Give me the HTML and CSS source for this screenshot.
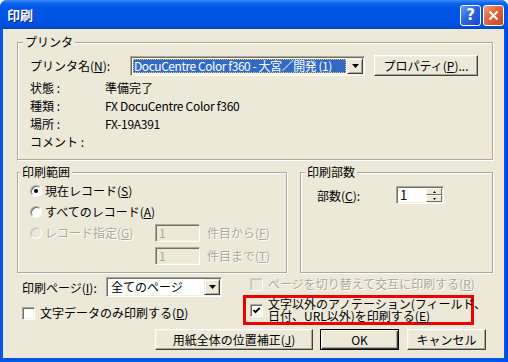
FILE: index.html
```html
<!DOCTYPE html>
<html lang="ja">
<head>
<meta charset="utf-8">
<title>印刷</title>
<link rel="stylesheet" href="styles.css">
</head>
<body>
<div class="window">
  <div class="titlebar">
    <span class="title">印刷</span>
    <div class="tb-buttons">
      <span class="tb-btn help">?</span>
      <span class="tb-btn close"><svg width="11" height="11" viewBox="0 0 11 11"><path d="M1.5 1.5 L9.5 9.5 M9.5 1.5 L1.5 9.5" stroke="#fff" stroke-width="2" fill="none"/></svg></span>
    </div>
  </div>
  <div class="client">
    <fieldset class="group printer">
      <legend class="lg-printer">プリンタ</legend>
      <div class="printer-inner">
        <div class="name-row">
          <span class="name-label">プリンタ名(<u>N</u>):</span>
          <div class="combo printer-combo">
            <span class="combo-value selected">DocuCentre Color f360 - 大宮／開発 (1)</span>
            <span class="drop-btn"><svg width="7" height="4" viewBox="0 0 7 4"><polygon points="0,0 7,0 3.5,4" fill="#000"/></svg></span>
          </div>
          <button class="btn prop-btn">プロパティ(<u>P</u>)...</button>
        </div>
        <dl class="info">
          <dt>状態 :</dt><dd>準備完了</dd>
          <dt>種類 :</dt><dd class="latin">FX DocuCentre Color f360</dd>
          <dt>場所 :</dt><dd class="latin">FX-19A391</dd>
          <dt>コメント :</dt><dd></dd>
        </dl>
      </div>
    </fieldset>

    <div class="groups-row">
      <fieldset class="group range">
        <legend class="lg-range">印刷範囲</legend>
        <div class="range-inner">
          <div class="opt-row">
            <span class="radio checked"></span><span class="opt-text">現在レコード(<u>S</u>)</span>
          </div>
          <div class="opt-row">
            <span class="radio"></span><span class="opt-text">すべてのレコード(<u>A</u>)</span>
          </div>
          <div class="opt-row">
            <span class="opt-lead"><span class="radio disabled"></span><span class="opt-text disabled-text">レコード指定(<u>G</u>)</span></span>
            <span class="field disabled-field">1</span>
            <span class="after-text disabled-text">件目から(<u>F</u>)</span>
          </div>
          <div class="opt-row last-row">
            <span class="field disabled-field">1</span>
            <span class="after-text disabled-text">件目まで(<u>T</u>)</span>
          </div>
        </div>
      </fieldset>
      <fieldset class="group copies">
        <legend class="lg-copies">印刷部数</legend>
        <div class="copies-inner">
          <span class="copies-label">部数(<u>C</u>):</span>
          <div class="spin">
            <span class="spin-value">1</span>
            <span class="spin-btns">
              <span class="spin-btn"><svg width="3" height="2" viewBox="0 0 3 2"><polygon points="1.5,0 3,2 0,2" fill="#000"/></svg></span>
              <span class="spin-btn"><svg width="3" height="2" viewBox="0 0 3 2"><polygon points="0,0 3,0 1.5,2" fill="#000"/></svg></span>
            </span>
          </div>
        </div>
      </fieldset>
    </div>

    <div class="bottom">
      <div class="bottom-left">
        <div class="page-row">
          <span class="page-label">印刷ページ(<u>I</u>):</span>
          <div class="combo page-combo">
            <span class="combo-value">全てのページ</span>
            <span class="drop-btn"><svg width="7" height="4" viewBox="0 0 7 4"><polygon points="0,0 7,0 3.5,4" fill="#000"/></svg></span>
          </div>
        </div>
        <div class="check-row text-only">
          <span class="checkbox"></span><span class="check-text">文字データのみ印刷する(<u>D</u>)</span>
        </div>
      </div>
      <div class="bottom-right">
        <div class="check-row alt-row">
          <span class="checkbox disabled"></span><span class="check-text disabled-text">ページを切り替えて交互に印刷する(<u>R</u>)</span>
        </div>
        <div class="highlight">
          <span class="checkbox checked"><svg width="9" height="9" viewBox="0 0 9 9"><path d="M1.5 4 L3.5 6.2 L7.8 1.8" stroke="#000" stroke-width="1.8" fill="none"/></svg></span>
          <span class="check-text two-line"><span class="line">文字以外のアノテーション(フィールド、</span><span class="line">日付、URL以外)を印刷する(<u>E</u>)</span></span>
        </div>
      </div>
    </div>

    <div class="buttons">
      <button class="btn fit-btn">用紙全体の位置補正(<u>J</u>)</button>
      <button class="btn ok-btn">OK</button>
      <button class="btn cancel-btn">キャンセル</button>
    </div>
  </div>
</div>
</body>
</html>
```

FILE: styles.css
```css
html, body {
  margin: 0;
  padding: 0;
  background: #ffffff;
}

.window {
  width: 508px;
  height: 362px;
  box-sizing: border-box;
  display: flex;
  flex-direction: column;
  background: linear-gradient(to right, #0831D9 0, #166AEE 1px, #0055E5 2px, #0055E5 calc(100% - 2px), #0831D9 100%);
  border-radius: 7px 7px 0 0;
  overflow: hidden;
  font-family: "Noto Sans CJK JP", "MS UI Gothic", sans-serif;
  font-size: 12px;
  color: #000;
}

.titlebar {
  height: 29px;
  flex: none;
  display: flex;
  align-items: center;
  padding: 0 4px 0 7px;
  background: linear-gradient(to bottom, #3E8EF8 0px, #1C70F4 2px, #0761EE 4px, #0056E6 8px, #0054E3 20px, #0050DA 26px, #0044C4 29px);
}

.title {
  color: #fff;
  font-weight: bold;
  font-size: 13px;
  line-height: 16px;
  text-shadow: 1px 1px 0 #0A1E8A;
}

.tb-buttons {
  margin-left: auto;
  display: flex;
  gap: 2px;
  margin-top: 2px;
}

.tb-btn {
  width: 21px;
  height: 21px;
  box-sizing: border-box;
  border: 1px solid #fff;
  border-radius: 3px;
  display: flex;
  align-items: center;
  justify-content: center;
}

.help {
  background: linear-gradient(135deg, #6C9CF8 0%, #2D63E6 45%, #1A47C8 100%);
  color: #fff;
  font-family: "DejaVu Sans", sans-serif;
  font-weight: bold;
  font-size: 15px;
  line-height: 19px;
}

.close {
  background: linear-gradient(135deg, #F0A07E 0%, #DE6A43 40%, #C8461F 100%);
}

.client {
  flex: 1;
  margin: 0 4px 4px 3px;
  background: #ECE9D8;
  padding: 6px 0 0 14px;
  display: flex;
  flex-direction: column;
  min-height: 0;
}

.latin {
  letter-spacing: -0.3px;
}

/* Group boxes */
.group {
  margin: 0;
  padding: 0;
  min-width: 0;
  box-sizing: border-box;
  border: 1px solid #ACA899;
  box-shadow: inset 1px 1px 0 #fff, 1px 1px 0 #fff;
}

.group legend {
  padding: 0 2px;
  line-height: 14px;
  background: #ECE9D8;
}

.lg-printer { margin-left: 5px; }
.lg-range { margin-left: 2px; }
.lg-copies { margin-left: 4px; }

.printer {
  width: 476px;
  height: 125px;
}

.printer-inner {
  padding: 6px 0 0 12px;
}

.name-row {
  display: flex;
  align-items: center;
  height: 21px;
}

.name-label {
  width: 100px;
  flex: none;
}

/* Combo boxes */
.combo {
  box-sizing: border-box;
  display: flex;
  align-items: stretch;
  background: #fff;
  border: 1px solid;
  border-color: #ACA899 #fff #fff #ACA899;
  box-shadow: inset 1px 1px 0 #716F64, inset -1px -1px 0 #F1EFE2;
  padding: 2px;
}

.printer-combo {
  width: 235px;
  height: 20px;
}

.combo-value {
  flex: 1;
  min-width: 0;
  display: flex;
  align-items: center;
  padding-left: 2px;
  line-height: 14px;
  white-space: nowrap;
}

.combo-value.selected {
  background: #316AC5;
  color: #fff;
  outline: 1px dotted #E6C24A;
  outline-offset: -1px;
  margin-right: 1px;
  padding-left: 1px;
  letter-spacing: -0.45px;
}

.drop-btn {
  width: 16px;
  flex: none;
  box-sizing: border-box;
  background: #ECE9D8;
  border: 1px solid;
  border-color: #F1EFE2 #404040 #404040 #F1EFE2;
  box-shadow: inset 1px 1px 0 #fff, inset -1px -1px 0 #ACA899;
  display: flex;
  align-items: center;
  justify-content: center;
  margin: -1px -1px -1px 0;
}

/* Buttons */
.btn {
  font: inherit;
  color: #000;
  background: #ECE9D8;
  box-sizing: border-box;
  height: 21px;
  padding: 0;
  border: 1px solid;
  border-color: #fff #404040 #404040 #fff;
  box-shadow: inset -1px -1px 0 #ACA899, inset 1px 1px 0 #F1EFE2;
  line-height: 17px;
  text-align: center;
  white-space: nowrap;
}

.prop-btn {
  width: 104px;
  margin-left: 9px;
}

.info {
  margin: 3px 0 0 0;
  display: grid;
  grid-template-columns: 75px 1fr;
  grid-auto-rows: 18px;
  align-items: center;
}

.info dt, .info dd {
  margin: 0;
  line-height: 14px;
}

/* Range & copies row */
.groups-row {
  display: flex;
  gap: 13px;
  margin-top: 5px;
}

.range {
  width: 270px;
  height: 108px;
}

.copies {
  width: 193px;
  height: 108px;
}

.range-inner {
  padding: 1px 0 0 12px;
}

.opt-row {
  display: flex;
  align-items: center;
  height: 21px;
}

.last-row {
  margin-top: 2px;
  padding-left: 125px;
}

.opt-lead {
  width: 125px;
  flex: none;
  display: flex;
  align-items: center;
}

.radio {
  width: 12px;
  height: 12px;
  box-sizing: border-box;
  border-radius: 50%;
  border: 1px solid;
  border-color: #ACA899 #fff #fff #ACA899;
  background: #fff;
  box-shadow: inset 1px 1px 0 #716F64;
  flex: none;
  display: flex;
  align-items: center;
  justify-content: center;
}

.radio.checked::after {
  content: "";
  width: 4px;
  height: 4px;
  border-radius: 50%;
  background: #000;
}

.radio.disabled {
  background: #ECE9D8;
  box-shadow: inset 1px 1px 0 #C9C6B8;
  border-color: #D4D0C8 #fff #fff #D4D0C8;
}

.opt-text {
  margin-left: 3px;
  line-height: 14px;
  white-space: nowrap;
}

.disabled-text {
  color: #ACA899;
  text-shadow: 1px 1px 0 #fff;
}

.field {
  box-sizing: border-box;
  width: 45px;
  height: 18px;
  border: 1px solid;
  border-color: #ACA899 #fff #fff #ACA899;
  box-shadow: inset 1px 1px 0 #716F64, inset -1px -1px 0 #F1EFE2;
  padding: 0 3px;
  line-height: 16px;
  flex: none;
}

.disabled-field {
  background: #ECE9D8;
  color: #ACA899;
}

.after-text {
  margin-left: 7px;
  white-space: nowrap;
}

.copies-inner {
  padding: 6px 0 0 16px;
  display: flex;
  align-items: center;
  height: 20px;
}

.copies-label {
  width: 79px;
  flex: none;
}

.spin {
  box-sizing: border-box;
  width: 48px;
  height: 18px;
  display: flex;
  background: #fff;
  border: 1px solid;
  border-color: #ACA899 #fff #fff #ACA899;
  box-shadow: inset 1px 1px 0 #716F64, inset -1px -1px 0 #F1EFE2;
  padding: 1px 1px 1px 2px;
}

.spin-value {
  flex: 1;
  line-height: 14px;
  font-size: 13px;
  padding-left: 1px;
}

.spin-btns {
  width: 16px;
  display: flex;
  flex-direction: column;
}

.spin-btn {
  flex: 1;
  box-sizing: border-box;
  background: #ECE9D8;
  border: 1px solid;
  border-color: #fff #716F64 #716F64 #fff;
  display: flex;
  align-items: center;
  justify-content: center;
}

/* Bottom area */
.bottom {
  display: flex;
  margin-top: 4px;
}

.bottom-left {
  width: 226px;
  flex: none;
  box-sizing: border-box;
  padding-left: 5px;
}

.page-row {
  display: flex;
  align-items: center;
  height: 20px;
}

.page-label {
  width: 84px;
  flex: none;
}

.page-combo {
  width: 116px;
  height: 20px;
  padding: 1px 2px 1px 2px;
}

.page-combo .drop-btn {
  margin: 0 -1px 0 0;
}

.check-row {
  display: flex;
  align-items: center;
  height: 14px;
}

.text-only {
  margin-top: 9px;
}

.checkbox {
  width: 13px;
  height: 13px;
  box-sizing: border-box;
  flex: none;
  background: #fff;
  border: 1px solid;
  border-color: #ACA899 #fff #fff #ACA899;
  box-shadow: inset 1px 1px 0 #716F64, inset -1px -1px 0 #F1EFE2;
  display: flex;
  align-items: center;
  justify-content: center;
}

.checkbox.disabled {
  background: #ECE9D8;
  box-shadow: inset 1px 1px 0 #C9C6B8;
  border-color: #D4D0C8 #fff #fff #D4D0C8;
}

.check-text {
  margin-left: 5px;
  white-space: nowrap;
  line-height: 14px;
}

.bottom-right {
  width: 231px;
  flex: none;
}

.alt-row {
  padding-left: 7px;
}

.highlight {
  margin-top: 4px;
  box-sizing: border-box;
  height: 30px;
  border: 3px solid #EE0000;
  display: flex;
  align-items: center;
  padding-left: 4px;
}

.two-line {
  display: flex;
  flex-direction: column;
}

.two-line .line {
  display: block;
  height: 12px;
  line-height: 12px;
}

.buttons {
  display: flex;
  margin-top: 4px;
  padding-left: 138px;
}

.fit-btn {
  width: 158px;
}

.ok-btn {
  width: 79px;
  margin-left: 7px;
  border: 1px solid #000;
  box-shadow: inset 1px 1px 0 #fff, inset -1px -1px 0 #404040, inset -2px -2px 0 #ACA899;
}

.cancel-btn {
  width: 79px;
  margin-left: 8px;
}
```
